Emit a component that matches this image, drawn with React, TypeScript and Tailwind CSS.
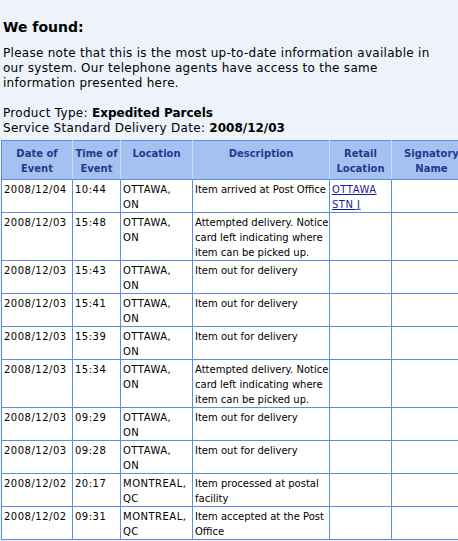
import React from "react";

const rows: { d: string; t: string; loc: string[]; desc: string[]; retail?: string[] }[] = [
  { d: "2008/12/04", t: "10:44", loc: ["OTTAWA,", "ON"], desc: ["Item arrived at Post Office"], retail: ["OTTAWA", "STN J"] },
  { d: "2008/12/03", t: "15:48", loc: ["OTTAWA,", "ON"], desc: ["Attempted delivery. Notice", "card left indicating where", "item can be picked up."] },
  { d: "2008/12/03", t: "15:43", loc: ["OTTAWA,", "ON"], desc: ["Item out for delivery"] },
  { d: "2008/12/03", t: "15:41", loc: ["OTTAWA,", "ON"], desc: ["Item out for delivery"] },
  { d: "2008/12/03", t: "15:39", loc: ["OTTAWA,", "ON"], desc: ["Item out for delivery"] },
  { d: "2008/12/03", t: "15:34", loc: ["OTTAWA,", "ON"], desc: ["Attempted delivery. Notice", "card left indicating where", "item can be picked up."] },
  { d: "2008/12/03", t: "09:29", loc: ["OTTAWA,", "ON"], desc: ["Item out for delivery"] },
  { d: "2008/12/03", t: "09:28", loc: ["OTTAWA,", "ON"], desc: ["Item out for delivery"] },
  { d: "2008/12/02", t: "20:17", loc: ["MONTREAL,", "QC"], desc: ["Item processed at postal", "facility"] },
  { d: "2008/12/02", t: "09:31", loc: ["MONTREAL,", "QC"], desc: ["Item accepted at the Post", "Office"] },
];

const headers = [["Date of", "Event"], ["Time of", "Event"], ["Location"], ["Description"], ["Retail", "Location"], ["Signatory", "Name"]];

function Lines({ lines }: { lines: string[] }) {
  return (
    <>
      {lines.map((l, i) => (
        <div key={i} className="whitespace-nowrap">{l}</div>
      ))}
    </>
  );
}

export default function App() {
  const td = "border border-[#5b8de6] px-[2px] pt-[2px] pb-0 align-top text-left";
  const tdw = td + " tracking-[0.5px]";
  return (
    <div className="w-[458px] h-[541px] overflow-hidden bg-[#eef2fb] text-black" style={{ fontFamily: "Verdana, 'DejaVu Sans', sans-serif" }}>
      <div className="pl-[3px] pt-[19px]">
        <h1 className="text-[14px] leading-[17px] font-bold">We found:</h1>
        <p className="mt-[10px] text-[12px] leading-[15px] tracking-[0.28px]">
          Please note that this is the most up-to-date information available in<br />
          our system. Our telephone agents have access to the same<br />
          information presented here.
        </p>
        <div className="mt-[15px] text-[12px] leading-[15px] tracking-[0.3px]">
          <div>Product Type: <b className="tracking-normal">Expedited Parcels</b></div>
          <div>Service Standard Delivery Date: <b className="tracking-normal">2008/12/03</b></div>
        </div>
      </div>
      <table className="mt-[4px] ml-px border-collapse table-fixed w-[470px] text-[10px] leading-[15px]">
        <colgroup>
          <col className="w-[71px]" />
          <col className="w-[48px]" />
          <col className="w-[72px]" />
          <col className="w-[137px]" />
          <col className="w-[62px]" />
          <col className="w-[80px]" />
        </colgroup>
        <thead>
          <tr className="bg-[#a5c1f1]">
            {headers.map((h, i) => (
              <th key={i} className="border-y border-y-[#5b8de6] border-x border-x-[#c9daf7] first:border-l-[#5b8de6] px-[2px] pt-[5px] pb-[3px] align-top text-center font-bold text-[#1c3c8c]">
                <Lines lines={h} />
              </th>
            ))}
          </tr>
        </thead>
        <tbody className="bg-white">
          {rows.map((r, i) => (
            <tr key={i}>
              <td className={tdw}>{r.d}</td>
              <td className={tdw}>{r.t}</td>
              <td className={tdw}><Lines lines={r.loc} /></td>
              <td className={td}><Lines lines={r.desc} /></td>
              <td className={tdw}>
                {r.retail ? (
                  <a href="#" className="text-[#1a1aa0] underline">
                    {r.retail[0]}<br />{r.retail[1]}
                  </a>
                ) : null}
              </td>
              <td className={td}></td>
            </tr>
          ))}
        </tbody>
      </table>
    </div>
  );
}
